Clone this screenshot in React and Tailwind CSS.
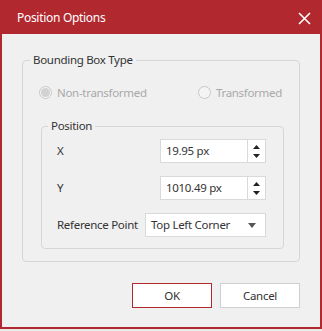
function Spin({ value }) {
    return (
        <div className="flex w-[106px] h-[24px] border border-[#d9d9d9] bg-white">
            <div className="flex-1 flex items-center pl-[5px] text-[#333]">{value}</div>
            <div className="w-[18px] border-l border-[#d9d9d9] flex flex-col items-center justify-center gap-[5px]">
                <svg width="7" height="4" viewBox="0 0 7 4"><path d="M0 4 L3.5 0 L7 4 Z" fill="#222" /></svg>
                <svg width="7" height="4" viewBox="0 0 7 4"><path d="M0 0 L3.5 4 L7 0 Z" fill="#222" /></svg>
            </div>
        </div>
    );
}

function Radio({ checked, label }) {
    return (
        <div className="flex items-center gap-[5px] text-[#a9a9a9]">
            <span className="w-[13px] h-[13px] rounded-full border border-[#c8c8c8] bg-[#f4f4f4] flex items-center justify-center">
                {checked && <span className="w-[9px] h-[9px] rounded-full bg-[#d2d2d2]" />}
            </span>
            {label}
        </div>
    );
}

export default function App() {
    return (
        <div
            className="w-[322px] h-[331px] bg-[#e9e9e9] text-[11.5px] tracking-[-0.3px] whitespace-nowrap"
            style={{ fontFamily: '"Noto Sans", "Open Sans", sans-serif' }}
        >
            <div className="h-[329px] border-2 border-[#b2282f] bg-[#f0f0f0] flex flex-col">
                <div className="h-[32px] shrink-0 bg-[#b2282f] flex items-center justify-between pl-[15px] pr-[9px]">
                    <span className="text-white text-[12px]">Position Options</span>
                    <svg width="13" height="13" viewBox="0 0 13 13">
                        <path d="M1 1 L12 12 M12 1 L1 12" stroke="#fff" strokeWidth="1.6" />
                    </svg>
                </div>

                <div className="px-[20px] pt-[18px] flex flex-col">
                    <fieldset className="border border-[#d6d6d6] rounded-[4px] pl-[16px] pr-[15px] pb-[12px]">
                        <legend className="px-[3px] -ml-[9px] leading-[16px] text-[#333]">Bounding Box Type</legend>

                        <div className="flex items-center justify-between pr-[2px] mt-[17px] mb-[18px] h-[15px]">
                            <Radio checked label="Non-transformed" />
                            <Radio label="Transformed" />
                        </div>

                        <fieldset className="border border-[#d6d6d6] rounded-[4px] pl-[15px] pr-[17px] pb-[11px] ml-[2px]">
                            <legend className="px-[3px] -ml-[9px] leading-[16px] text-[#333]">Position</legend>
                            <div className="flex flex-col gap-[13px] mt-[5px] text-[#333]">
                                <div className="flex items-center justify-between">
                                    <span>X</span>
                                    <Spin value="19.95 px" />
                                </div>
                                <div className="flex items-center justify-between">
                                    <span>Y</span>
                                    <Spin value="1010.49 px" />
                                </div>
                                <div className="flex items-center justify-between">
                                    <span>Reference Point</span>
                                    <div className="w-[121px] h-[24px] border border-[#d9d9d9] bg-white flex items-center justify-between pl-[5px] pr-[9px]">
                                        <span>Top Left Corner</span>
                                        <svg width="8" height="5" viewBox="0 0 8 5"><path d="M0 0 L4 5 L8 0 Z" fill="#555" /></svg>
                                    </div>
                                </div>
                            </div>
                        </fieldset>
                    </fieldset>

                    <div className="flex justify-end gap-[8px] mt-[21px] text-[#333]">
                        <button className="w-[80px] h-[25px] bg-white border border-[#b2282f]">OK</button>
                        <button className="w-[80px] h-[25px] bg-white border border-[#cfcfcf]">Cancel</button>
                    </div>
                </div>
            </div>
        </div>
    );
}
